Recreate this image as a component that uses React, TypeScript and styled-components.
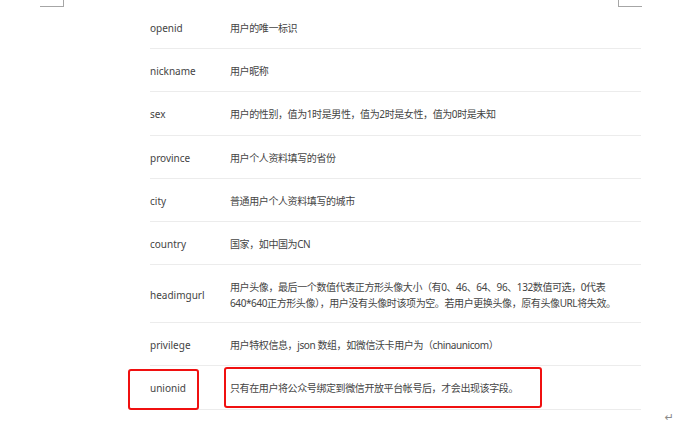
import React from 'react';
import styled, { createGlobalStyle } from 'styled-components';

const GlobalStyle = createGlobalStyle`
  html, body {
    margin: 0;
    padding: 0;
    background: #ffffff;
  }
  body {
    font-family: "Noto Sans", "Noto Sans CJK SC", sans-serif;
    color: #444;
  }
`;

const Page = styled.div`
  width: 681px;
  height: 427px;
  overflow: hidden;
  display: flex;
  flex-direction: column;
  position: relative;
`;

const CornerBar = styled.div`
  display: flex;
  justify-content: space-between;
  padding: 0 39px 0 40px;
  height: 6px;
`;

const Corner = styled.div<{ $side: 'left' | 'right' }>`
  width: 23px;
  height: 6px;
  border-bottom: 1px solid #a6a6a6;
  ${({ $side }) =>
    $side === 'left' ? 'border-right: 1px solid #a6a6a6;' : 'border-left: 1px solid #a6a6a6;'}
`;

const Table = styled.div`
  margin-left: 150px;
  width: 491px;
  display: flex;
  flex-direction: column;
`;

const Row = styled.div<{ $h: number }>`
  box-sizing: border-box;
  height: ${({ $h }) => $h}px;
  display: grid;
  grid-template-columns: 80px 1fr;
  align-items: center;
  padding-top: 2px;
  border-bottom: 1px solid #ececec;
  font-size: 10px;
  line-height: 16px;
`;

const Cell = styled.div<{ $desc?: boolean }>`
  position: relative;
  white-space: nowrap;
  letter-spacing: ${({ $desc }) => ($desc ? '-0.4px' : '0')};
`;

const Mark = styled.div<{ $l: number; $t: number; $w: number; $h: number }>`
  position: absolute;
  left: ${({ $l }) => $l}px;
  top: ${({ $t }) => $t}px;
  width: ${({ $w }) => $w}px;
  height: ${({ $h }) => $h}px;
  box-sizing: border-box;
  border: 2px solid #f01010;
  border-radius: 3px;
`;

const Footer = styled.div`
  display: flex;
  justify-content: flex-end;
  padding: 0 7px 0 0;
  margin-top: 1px;
`;

const ParaMark = styled.span`
  font-family: "DejaVu Sans", sans-serif;
  font-size: 11px;
  line-height: 14px;
  color: #8a8a8a;
`;

type Item = { key: string; desc: React.ReactNode; h?: number };

const items: Item[] = [
  { key: 'openid', desc: '用户的唯一标识' },
  { key: 'nickname', desc: '用户昵称' },
  { key: 'sex', desc: '用户的性别，值为1时是男性，值为2时是女性，值为0时是未知' },
  { key: 'province', desc: '用户个人资料填写的省份' },
  { key: 'city', desc: '普通用户个人资料填写的城市' },
  { key: 'country', desc: '国家，如中国为CN' },
  {
    key: 'headimgurl',
    h: 58,
    desc: (
      <>
        用户头像，最后一个数值代表正方形头像大小（有0、46、64、96、132数值可选，0代表
        <br />
        640*640正方形头像），用户没有头像时该项为空。若用户更换头像，原有头像URL将失效。
      </>
    ),
  },
  { key: 'privilege', desc: '用户特权信息，json 数组，如微信沃卡用户为（chinaunicom）' },
];

export default function App() {
  return (
    <>
      <GlobalStyle />
      <Page>
        <CornerBar>
          <Corner $side="left" />
          <Corner $side="right" />
        </CornerBar>
        <Table>
          {items.map((it) => (
            <Row key={it.key} $h={it.h ?? 43.2}>
              <Cell>{it.key}</Cell>
              <Cell $desc>{it.desc}</Cell>
            </Row>
          ))}
          <Row $h={43.2}>
            <Cell>
              unionid
              <Mark $l={-22} $t={-11} $w={71} $h={41} />
            </Cell>
            <Cell $desc>
              只有在用户将公众号绑定到微信开放平台帐号后，才会出现该字段。
              <Mark $l={-6} $t={-13} $w={318} $h={41} />
            </Cell>
          </Row>
        </Table>
        <Footer>
          <ParaMark>↵</ParaMark>
        </Footer>
      </Page>
    </>
  );
}
